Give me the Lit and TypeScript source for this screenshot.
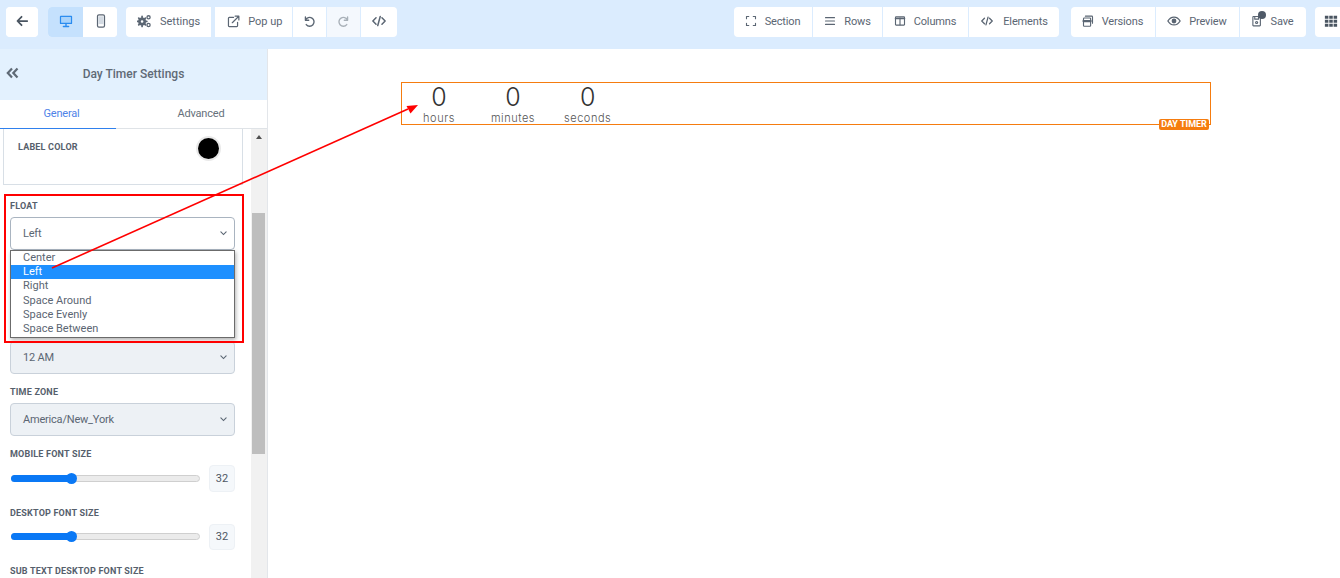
import { LitElement, html, css, svg } from "lit";
import { customElement } from "lit/decorators.js";

const s = (body: unknown, vb = "0 0 16 16") => html`<svg class="ic" viewBox=${vb} fill="none" stroke="currentColor" stroke-width="1.5" stroke-linecap="round" stroke-linejoin="round">${body}</svg>`;

const icons = {
  back: s(svg`<path d="M14 8H3M7.500 3.200 2.800 8l4.700 4.800" stroke-width="2"/>`),
  desktop: s(svg`<rect x="1" y="2" width="14" height="9.500" rx="1" fill="currentColor" stroke="none"/><rect x="2.400" y="3.400" width="11.200" height="6.600" fill="#a9d3fb" stroke="none"/><path d="M5 14.200h6M8 11.500v2.600" stroke-width="1.600"/>`),
  mobile: s(svg`<rect x="4" y="1" width="8" height="14" rx="1.600" stroke-width="1.400"/><rect x="5" y="2.600" width="6" height="9" fill="#d3dae2" stroke="none"/>`),
  cogs: s(svg`<circle cx="5.800" cy="8.500" r="3" stroke-width="3"/><path d="M5.800 2.800v1.600M5.800 12.600v1.600M.4 8.500H2M9.600 8.500h1.600M2 4.700l1.100 1.100M8.500 11.200l1.100 1.100M2 12.300l1.100-1.100M8.500 5.800l1.100-1.100" stroke-width="2"/><circle cx="13.200" cy="3.800" r="1.800" stroke-width="1.500"/><circle cx="13.200" cy="12.600" r="1.800" stroke-width="1.500"/>`),
  popup: s(svg`<path d="M13 9v4.200a1 1 0 0 1-1 1H2.800a1 1 0 0 1-1-1V4a1 1 0 0 1 1-1H8"/><path d="M6.500 9.500 14.500 1.600M10 1.500h4.600V6"/>`),
  undo: s(svg`<path d="M3 2.500v4h4" stroke-width="1.700"/><path d="M3.200 6.300A5.400 5.400 0 1 1 4 11.800" stroke-width="1.700"/>`),
  redo: s(svg`<path d="M13 2.500v4H9" stroke-width="1.700"/><path d="M12.800 6.300A5.400 5.400 0 1 0 12 11.800" stroke-width="1.700"/>`),
  code: s(svg`<path d="M4.600 4.300 1 8l3.600 3.700M11.400 4.300 15 8l-3.600 3.700M9.400 2.800 6.600 13.200" stroke-width="1.700"/>`),
  section: s(svg`<path d="M2 5V2h3M11 2h3v3M14 11v3h-3M5 14H2v-3"/>`),
  rows: s(svg`<path d="M2 3.500h12M2 8h12M2 12.500h12"/>`),
  columns: s(svg`<rect x="2" y="2.500" width="12" height="11" rx=".8"/><path d="M2 4.600h12" stroke-width="2"/><path d="M8 4v9"/>`),
  versions: s(svg`<rect x="2" y="4" width="9.500" height="11" rx="1"/><path d="M2 8h9.500" stroke-width="3"/><path d="M4.500 1.500H13a1 1 0 0 1 1 1V11"/>`),
  eye: s(svg`<path d="M1 8s2.600-4.500 7-4.500S15 8 15 8s-2.600 4.500-7 4.500S1 8 1 8Z"/><circle cx="8" cy="8" r="2" fill="currentColor"/>`),
  save: s(svg`<rect x="2.500" y="2" width="10" height="12.500" rx=".8"/><path d="M5 2v3.500h5V2"/><circle cx="7.500" cy="10" r="1.400"/>`),
  grid: html`<svg class="ic" viewBox="0 0 16 16" fill="currentColor"><path d="M1 2h4v3.500H1zM6 2h4v3.500H6zM11 2h4v3.500h-4zM1 6.500h4V10H1zM6 6.500h4V10H6zM11 6.500h4V10h-4zM1 11h4v3.500H1zM6 11h4v3.500H6zM11 11h4v3.500h-4z"/></svg>`,
};

const chev = html`<svg class="chev" viewBox="0 0 8 5" fill="none" stroke="currentColor" stroke-width="1.300" stroke-linecap="round"><path d="M1 1 4 4l3-3"/></svg>`;

@customElement("app-root")
export class AppRoot extends LitElement {
  static styles = css`
    :host { display: block; position: relative; width: 1340px; height: 578px; overflow: hidden; background: #fff; font-family: Roboto, "Liberation Sans", sans-serif; color: #5b6673; }
    * { box-sizing: border-box; }
    .ic { width: 14px; height: 14px; flex: none; display: block; }

    .top { height: 49px; background: #dbecfe; display: flex; justify-content: space-between; align-items: flex-start; padding: 7px 0 0 6px; overflow: hidden; }
    .side { display: flex; gap: 9px; align-items: flex-start; }
    .side.right { gap: 12px; margin-right: -15px; }
    .group { display: flex; height: 30px; border-radius: 4px; overflow: hidden; background: #fff; gap: 1px; }
    .group.tight { background: #dbecfe; }
    .btn { height: 30px; background: #fff; display: flex; align-items: center; justify-content: center; gap: 9px; padding: 0 11px 2px; font-size: 11px; color: #5b6673; white-space: nowrap; position: relative; }
    .btn.pp { padding: 0 10px 2px 12px; gap: 8px; }
    .btn.pp .ic { width: 13px; height: 13px; }
    .btn.sm { gap: 8px; letter-spacing: -.15px; }
    .btn.sm .ic { width: 12px; height: 12px; }
    .btn.xr { padding-right: 12px; }
    .btn.el { padding: 0 11px 2px 12px; gap: 10px; }
    .btn.pv { padding: 0 12px 2px 11px; }
    .btn.pv .ic { width: 14px; height: 14px; }
    .btn.sv { padding: 0 12.500px 2px 11px; }
    .btn.icon { padding: 0 10px 2px; }
    .btn.icon .ic { width: 13px; height: 13px; }
    .btn.code { padding: 0 11px 2px; }
    .btn.code .ic { width: 14px; height: 14px; }
    .btn.active { background: #c5e1fd; color: #2a8cf0; }
    .btn.off { background: #f4f8fd; color: #a8b0b8; }
    .back { width: 32px; padding: 0 0 2px; border-radius: 4px; color: #4a5561; }
    .dev { width: 35px; padding: 0 0 2px; }
    .dev.phone { width: 33px; }
    .devices { margin-left: 1px; }
    .sp { width: 2px; }
    .wide-grid { margin-left: -3px; width: 40px; justify-content: flex-start; padding-left: 9px; }
    .gridbtn { padding: 0 0 2px; color: #4a5561; }
    .dot { position: absolute; left: 18px; top: 4px; width: 8px; height: 8px; border-radius: 50%; background: #4f5a68; }

    .body { display: flex; height: 529px; }
    .panel { width: 268px; flex: none; border-right: 1px solid #e3e6ea; display: flex; flex-direction: column; height: 100%; overflow: hidden; }
    .phead { height: 51px; background: #e3f1fe; display: flex; align-items: center; justify-content: center; position: relative; font-size: 12px; font-weight: 500; color: #5f6a76; flex: none; padding-bottom: 2px; }
    .collapse { position: absolute; left: 6px; top: 18px; width: 13px; height: 12px; color: #5f6a76; }
    .tabs { display: flex; height: 29px; flex: none; font-size: 11px; letter-spacing: -.2px; border-bottom: 1px solid #dfe3e7; background: #fff; }
    .tab { display: flex; align-items: center; justify-content: center; color: #66707b; padding-bottom: 3px; margin-bottom: -1px; }
    .tab.on { width: 116px; flex: none; color: #4f83e8; border-bottom: 1px solid #2f80ed; padding: 0 0 2px 7px; }
    .tab.adv { width: 134px; margin-left: 19px; }

    .scroll { flex: 1; display: flex; min-height: 0; }
    .content { width: 251px; flex: none; padding: 0 8px 0 3px; height: 449px; overflow: hidden; }
    .card { height: 56px; border: 1px solid #d8dfe6; border-top: none; display: flex; justify-content: space-between; padding: 12px 23px 0 14px; width: 240px; margin-bottom: 15px; }
    .swatch { width: 21px; height: 21px; border-radius: 50%; background: #000; box-shadow: 0 0 0 2px #e9e9e9; margin-top: -3px; }
    .lab { display: block; font-size: 9px; line-height: 12px; font-weight: 700; color: #56606c; letter-spacing: .2px; text-transform: uppercase; white-space: nowrap; }
    .fields { padding-left: 7px; width: 232px; }
    .f-lab { height: 12px; margin-bottom: 5px; }
    .sel { height: 33px; width: 225px; border: 1px solid #c9d1da; border-radius: 4px; background: #edf1f5; display: flex; align-items: center; justify-content: space-between; padding: 0 7px 0 12px; font-size: 11px; letter-spacing: -.2px; color: #5b6673; }
    .sel.white { background: #fff; border-color: #a9b4c0; }
    .chev { width: 7px; height: 4.500px; color: #5b6673; }
    .float { margin-bottom: 91px; }
    .gapf { margin-bottom: 12px; }
    .slider-row { display: flex; align-items: center; height: 26.500px; justify-content: space-between; width: 225px; margin-bottom: 15px; padding-left: 1px; }
    .track { width: 189px; height: 7px; border-radius: 4px; background: #ebebeb; border: 1px solid #cfcfcf; position: relative; }
    .fill { position: absolute; left: -1px; top: -1px; height: 7px; border-radius: 4px; background: #0a78f5; width: 61px; }
    .knob { position: absolute; left: 54px; top: -3px; width: 11px; height: 11px; border-radius: 50%; background: #0a78f5; }
    .num { width: 26px; height: 26.500px; border: 1px solid #edf1f5; border-radius: 4px; background: #f5f8fb; font-size: 11px; display: flex; align-items: center; justify-content: center; color: #4d5763; }
    .sbar { width: 16px; flex: none; background: #f1f1f1; position: relative; display: flex; flex-direction: column; align-items: center; }
    .sbar .up { margin-top: 6px; width: 0; height: 0; border-left: 3.500px solid transparent; border-right: 3.500px solid transparent; border-bottom: 4px solid #505050; }
    .thumb { position: absolute; top: 84px; left: 1px; width: 13px; height: 241px; background: #bebebe; }

    .canvas { flex: 1; padding: 33px 129px 0 133px; }
    .timer { height: 43px; border: 1px solid #f57c0f; position: relative; display: flex; gap: 28px; padding-left: 14px; color: #333; }
    .unit { display: flex; flex-direction: column; align-items: center; min-width: 46px; }
    .n { font-family: Inter, "Open Sans", sans-serif; font-weight: 300; font-size: 25px; line-height: 29px; color: #333; }
    .u { font-family: Inter, "Open Sans", sans-serif; font-weight: 300; font-size: 11px; line-height: 13px; color: #555; letter-spacing: .55px; }
    .badge { position: absolute; right: 1px; bottom: -6px; height: 11px; width: 50px; background: #f57c0f; border-radius: 2px; color: #fff; font-size: 9px; font-weight: 700; line-height: 11px; text-align: center; white-space: nowrap; }

    .redbox { position: absolute; left: 4px; top: 194px; width: 240px; height: 149px; border: 2px solid #f00; pointer-events: none; z-index: 3; }
    .dd { position: absolute; left: 10px; top: 250px; width: 225px; height: 88px; border: 1px solid #6b6b6b; background: #fff; box-shadow: 1px 2px 4px rgba(0,0,0,.3); z-index: 2; font-size: 11px; line-height: 14.200px; color: #5b6673; }
    .dd div { padding-left: 12px; height: 14.200px; }
    .dd .hl { background: #1e90ff; color: #fff; }
    .arrow { position: absolute; left: 0; top: 0; width: 1340px; height: 578px; pointer-events: none; z-index: 4; }
  `;

  private tb(icon: unknown, label: string, extra = "") {
    return html`<div class="btn ${extra}">${icon}<span>${label}</span></div>`;
  }

  private slider() {
    return html`<div class="slider-row"><div class="track"><div class="fill"></div><div class="knob"></div></div><div class="num">32</div></div>`;
  }

  render() {
    return html`
      <div class="top">
        <div class="side">
          <div class="group"><div class="btn back">${icons.back}</div></div>
          <div class="group devices">
            <div class="btn dev active">${icons.desktop}</div>
            <div class="btn dev phone">${icons.mobile}</div>
          </div>
          <div class="group tight">
            ${this.tb(icons.cogs, "Settings")}
            <div class="sp"></div>
            ${this.tb(icons.popup, "Pop up", "pp")}
            <div class="btn icon">${icons.undo}</div>
            <div class="btn icon off">${icons.redo}</div>
            <div class="btn icon code">${icons.code}</div>
          </div>
        </div>
        <div class="side right">
          <div class="group tight">
            ${this.tb(icons.section, "Section", "sm xr")}
            ${this.tb(icons.rows, "Rows", "sm")}
            ${this.tb(icons.columns, "Columns", "sm xr")}
            ${this.tb(icons.code, "Elements", "sm el")}
          </div>
          <div class="group tight">
            ${this.tb(icons.versions, "Versions", "sm xr")}
            ${this.tb(icons.eye, "Preview", "sm pv")}
            <div class="btn sm sv">${icons.save}<span class="dot"></span><span>Save</span></div>
          </div>
          <div class="group wide-grid"><div class="btn gridbtn">${icons.grid}</div></div>
        </div>
      </div>

      <div class="body">
        <aside class="panel">
          <div class="phead">
            <svg class="collapse" viewBox="0 0 13 12" fill="none" stroke="currentColor" stroke-width="2.200"><path d="M6 1.500 1.800 6 6 10.500M11.500 1.500 7.300 6l4.200 4.500"/></svg>
            Day Timer Settings
          </div>
          <div class="tabs">
            <div class="tab on">General</div>
            <div class="tab adv">Advanced</div>
          </div>
          <div class="scroll">
            <div class="content">
              <div class="card"><span class="lab">Label color</span><span class="swatch"></span></div>
              <div class="fields">
                <div class="float">
                  <div class="lab f-lab">Float</div>
                  <div class="sel white">Left ${chev}</div>
                </div>
                <div class="gapf"><div class="sel">12 AM ${chev}</div></div>
                <div class="gapf">
                  <div class="lab f-lab">Time zone</div>
                  <div class="sel">America/New_York ${chev}</div>
                </div>
                <div class="lab f-lab">Mobile font size</div>
                ${this.slider()}
                <div class="lab f-lab">Desktop font size</div>
                ${this.slider()}
                <div class="lab f-lab">Sub text desktop font size</div>
              </div>
            </div>
            <div class="sbar"><div class="up"></div><div class="thumb"></div></div>
          </div>
        </aside>
        <main class="canvas">
          <div class="timer">
            ${[["0", "hours"], ["0", "minutes"], ["0", "seconds"]].map(([n, u]) => html`<div class="unit"><span class="n">${n}</span><span class="u">${u}</span></div>`)}
            <span class="badge">DAY TIMER</span>
          </div>
        </main>
      </div>

      <div class="dd">
        <div>Center</div><div class="hl">Left</div><div>Right</div><div>Space Around</div><div>Space Evenly</div><div>Space Between</div>
      </div>
      <div class="redbox"></div>
      <svg class="arrow" viewBox="0 0 1340 578">
        <line x1="52" y1="268" x2="408" y2="109" stroke="#f00" stroke-width="1.600"/>
        <path d="M418 105 406.500 106 410.500 113.500Z" fill="#f00"/>
      </svg>
    `;
  }
}
